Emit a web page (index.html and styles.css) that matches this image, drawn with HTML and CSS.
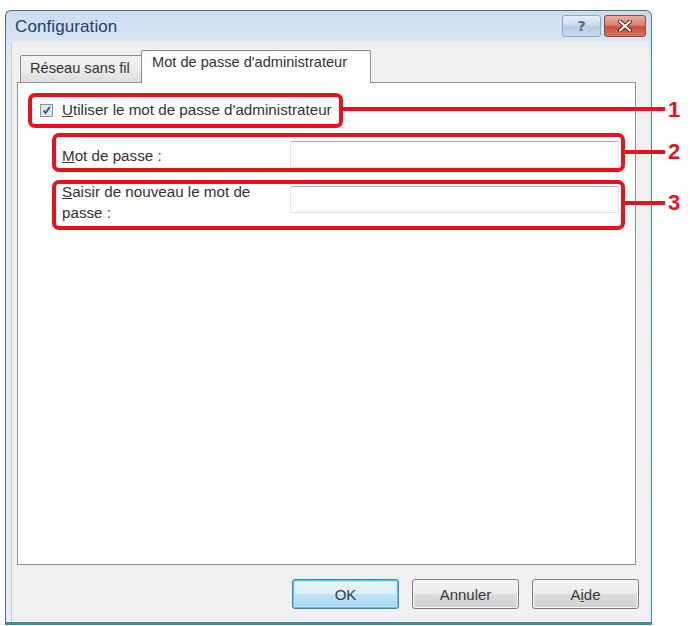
FILE: index.html
```html
<!DOCTYPE html>
<html lang="fr">
<head>
<meta charset="utf-8">
<title>Configuration</title>
<link rel="stylesheet" href="styles.css">
</head>
<body>
<div class="page">
  <div class="window">
    <div class="titlebar">
      <span class="title">Configuration</span>
      <div class="caption-buttons">
        <div class="cap-btn help"><span class="help-glyph">?</span></div>
        <div class="cap-btn close">
          <svg width="16" height="12" viewBox="0 0 16 12"><path d="M3 1.5 L13 10.5 M13 1.5 L3 10.5" stroke="#5a1a14" stroke-width="4" stroke-linecap="round"/><path d="M3 1.5 L13 10.5 M13 1.5 L3 10.5" stroke="#ffffff" stroke-width="2.2" stroke-linecap="round"/></svg>
        </div>
      </div>
    </div>
    <div class="client">
      <div class="tabs">
        <div class="tab inactive">Réseau sans fil</div>
        <div class="tab active">Mot de passe d'administrateur</div>
      </div>
      <div class="pane">
        <div class="row check-row">
          <span class="checkbox">
            <svg width="13" height="13" viewBox="0 0 13 13"><rect x="0.5" y="0.5" width="12" height="12" fill="#e6ebf2" stroke="#8a8f99"/><rect x="2" y="2" width="9" height="9" fill="#dce4ee"/><path d="M3.5 6.5 L5.5 9 L9.8 3" fill="none" stroke="#2e4e9a" stroke-width="1.8"/></svg>
          </span>
          <span class="label"><u>U</u>tiliser le mot de passe d'administrateur</span>
        </div>
        <div class="row field-row">
          <label class="field-label"><u>M</u>ot de passe :</label>
          <div class="input"></div>
        </div>
        <div class="row field-row tall">
          <label class="field-label"><u>S</u>aisir de nouveau le mot de<br>passe :</label>
          <div class="input"></div>
        </div>
      </div>
      <div class="buttons">
        <div class="btn default">OK</div>
        <div class="btn">Annuler</div>
        <div class="btn">A<u>i</u>de</div>
      </div>
    </div>
  </div>

  <div class="callout box1"></div>
  <div class="callout-line line1"></div>
  <div class="callout-num num1">1</div>

  <div class="callout box2"></div>
  <div class="callout-line line2"></div>
  <div class="callout-num num2">2</div>

  <div class="callout box3"></div>
  <div class="callout-line line3"></div>
  <div class="callout-num num3">3</div>
</div>
</body>
</html>
```
FILE: styles.css
```css
html, body {
  margin: 0;
  padding: 0;
  background: #ffffff;
}

body {
  font-family: "Liberation Sans", Arial, sans-serif;
  font-size: 15.2px;
  color: #333333;
}

.page {
  position: relative;
  width: 692px;
  height: 626px;
  overflow: hidden;
}

.window {
  margin: 10px 0 0 5px;
  width: 645px;
  height: 611px;
  border: 1px solid #5d6d7e;
  border-right-color: #3b8aa6;
  border-bottom: 3px solid #3b8aa6;
  border-radius: 6px 6px 0 0;
  background: linear-gradient(180deg, #c9dcf0 0px, #d9e6f3 31px, #e4ecf4 60px, #e8eef4 100%);
  display: flex;
  flex-direction: column;
}

.titlebar {
  height: 31px;
  display: flex;
  align-items: flex-start;
  justify-content: space-between;
  padding: 0 5px 0 9px;
}

.title {
  font-size: 17px;
  line-height: 31px;
  color: #24406a;
  letter-spacing: 0.1px;
}

.caption-buttons {
  display: flex;
  gap: 3px;
  margin-top: 4px;
}

.cap-btn {
  height: 22px;
  box-sizing: border-box;
  border-radius: 3px;
  display: flex;
  align-items: center;
  justify-content: center;
}

.help {
  width: 39px;
  border: 1px solid #8ea6c0;
  background: linear-gradient(180deg, #e3edf7 0%, #cddcec 45%, #b5cbe2 55%, #c7d9ec 100%);
}

.help-glyph {
  font-family: "DejaVu Sans", sans-serif;
  font-weight: bold;
  font-size: 14px;
  color: #56697f;
  line-height: 1;
}

.close {
  width: 42px;
  border: 1px solid #9a463c;
  background: linear-gradient(180deg, #eaaea3 0%, #da8074 45%, #c94d3e 55%, #d77565 100%);
}

.client {
  margin: 0 2px 0 5px;
  height: 580px;
  box-sizing: border-box;
  background: #f0f0f0;
  border-left: 1px solid #c4cfda;
  display: flex;
  flex-direction: column;
}

.tabs {
  margin-top: 8px;
  height: 32px;
  display: flex;
  align-items: flex-end;
  padding-left: 8px;
}

.tab {
  box-sizing: border-box;
  border: 1px solid #898c95;
  border-bottom: none;
  font-size: 14.6px;
  color: #333333;
}

.tab.inactive {
  width: 122px;
  height: 27px;
  padding: 4px 0 0 9px;
  background: linear-gradient(180deg, #f3f3f3 0%, #ebebeb 50%, #dddddd 100%);
  border-radius: 2px 0 0 0;
}

.tab.active {
  width: 230px;
  height: 33px;
  margin-left: -1px;
  margin-bottom: -1px;
  padding: 3px 0 0 10px;
  background: #ffffff;
  position: relative;
  z-index: 1;
  border-radius: 2px 2px 0 0;
}

.pane {
  margin-left: 5px;
  width: 619px;
  height: 483px;
  box-sizing: border-box;
  border: 1px solid #8e949c;
  background: #ffffff;
  padding-top: 18px;
}

.row {
  display: flex;
  align-items: center;
}

.check-row {
  padding-left: 22px;
  height: 18px;
}

.checkbox {
  width: 13px;
  height: 13px;
  display: flex;
  margin-right: 9px;
}

.label {
  line-height: 18px;
}

.field-row {
  padding-left: 44px;
  margin-top: 22px;
}

.field-row.tall {
  margin-top: 13px;
  align-items: flex-start;
}

.field-label {
  width: 228px;
  line-height: 21px;
  padding-top: 2px;
}

.field-row.tall .field-label {
  width: 215px;
  margin-right: 13px;
  padding-top: 0;
}

.input {
  width: 329px;
  height: 27px;
  box-sizing: border-box;
  background: #ffffff;
  border: 1px solid #dde3ea;
  border-top-color: #9fb3c8;
  border-radius: 2px;
}

.field-row.tall .input {
  margin-top: 5px;
}

.buttons {
  margin-top: 14px;
  display: flex;
  justify-content: flex-end;
  gap: 13px;
  padding-right: 10px;
}

.btn {
  width: 107px;
  height: 30px;
  box-sizing: border-box;
  border: 1px solid #7b7b7b;
  border-radius: 3px;
  background: linear-gradient(180deg, #f4f4f4 0%, #ebebeb 48%, #dcdcdc 52%, #d0d0d0 100%);
  display: flex;
  align-items: center;
  justify-content: center;
  font-size: 15px;
  color: #3a3a3a;
  box-shadow: inset 0 0 0 1px #f8f8f8;
}

.btn.default {
  border-color: #3b86b5;
  box-shadow: inset 0 0 0 1px #5fc2ea, inset 0 0 0 2px #bfe5f6;
  background: linear-gradient(180deg, #eaf6fd 0%, #dbeffa 48%, #bee3f7 52%, #a8d6f1 100%);
}

/* Annotation callouts drawn over the screenshot */
.callout {
  position: absolute;
  box-sizing: border-box;
  border: 4px solid #e8121c;
  border-radius: 7px;
}

.box1 { left: 28px; top: 93px; width: 315px; height: 35px; }
.box2 { left: 52px; top: 133px; width: 573px; height: 39px; }
.box3 { left: 52px; top: 180px; width: 573px; height: 50px; }

.callout-line {
  position: absolute;
  height: 4px;
  background: #e8121c;
}

.line1 { left: 341px; top: 107px; width: 324px; }
.line2 { left: 623px; top: 150px; width: 42px; }
.line3 { left: 623px; top: 201px; width: 42px; }

.callout-num {
  position: absolute;
  left: 668px;
  font-family: "Liberation Sans", Arial, sans-serif;
  font-weight: bold;
  font-size: 22px;
  line-height: 22px;
  color: #e8121c;
}

.num1 { top: 99px; }
.num2 { top: 141px; }
.num3 { top: 192px; }
```
